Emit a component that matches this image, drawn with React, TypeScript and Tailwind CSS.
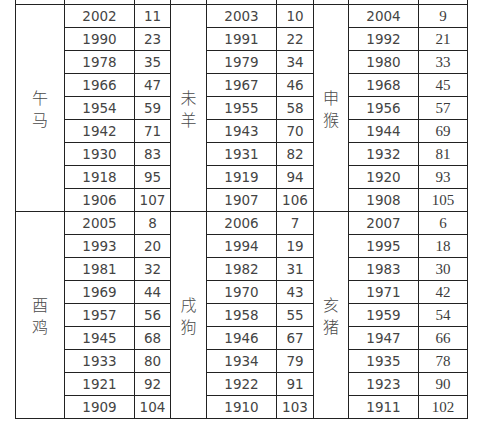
import React from "react";

const sections = [
  [
    { name: ["午", "马"], start: 2002 },
    { name: ["未", "羊"], start: 2003 },
    { name: ["申", "猴"], start: 2004 },
  ],
  [
    { name: ["酉", "鸡"], start: 2005 },
    { name: ["戌", "狗"], start: 2006 },
    { name: ["亥", "猪"], start: 2007 },
  ],
];

const cell = "border border-[#222] p-0 text-center align-middle leading-[18px]";
const num = "font-['DejaVu_Sans',sans-serif] text-[13.5px] text-[#444]";
const serifNum = "font-['Liberation_Serif',serif] text-[15px] text-[#3c3c3c]";
const nameCls =
  "font-['Noto_Sans_CJK_SC',sans-serif] text-[16px] leading-[22px] text-[#4a4a4a] font-light";

export default function App() {
  return (
    <div className="w-[500px] h-[422px] bg-white overflow-hidden">
      <table className="ml-[15px] table-fixed border-collapse w-[453px]">
        <colgroup>
          <col className="w-[49px]" />
          <col className="w-[70px]" />
          <col className="w-[36px]" />
          <col className="w-[36px]" />
          <col className="w-[70px]" />
          <col className="w-[37px]" />
          <col className="w-[35px]" />
          <col className="w-[70px]" />
          <col className="w-[49px]" />
        </colgroup>
        <tbody>
          <tr className="h-[4px]">
            {Array.from({ length: 9 }).map((_, i) => (
              <td key={i} className={cell + " border-t-0 leading-none"} />
            ))}
          </tr>
          {sections.map((sec, si) =>
            Array.from({ length: 9 }).map((_, r) => (
              <tr key={si + "-" + r} className="h-[23px]">
                {sec.map((g, gi) => {
                  const year = g.start - 12 * r;
                  const age = 2013 - year;
                  return (
                    <React.Fragment key={gi}>
                      {r === 0 && (
                        <td rowSpan={9} className={cell}>
                          <div className={nameCls}>
                            <div>{g.name[0]}</div>
                            <div>{g.name[1]}</div>
                          </div>
                        </td>
                      )}
                      <td className={cell + " " + num}>{year}</td>
                      <td className={cell + " " + (gi === 2 ? serifNum : num)}>
                        {age}
                      </td>
                    </React.Fragment>
                  );
                })}
              </tr>
            ))
          )}
        </tbody>
      </table>
    </div>
  );
}
